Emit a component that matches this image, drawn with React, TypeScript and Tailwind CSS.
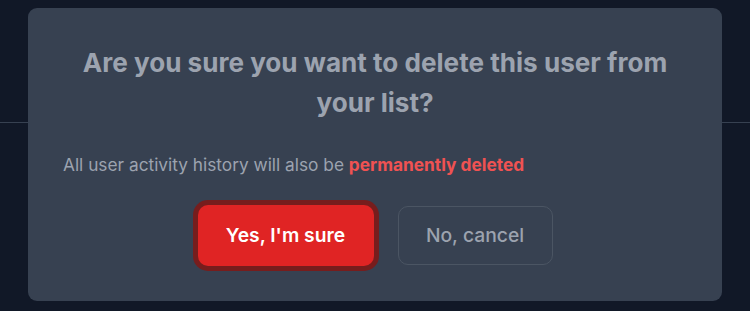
import React from "react";

export default function App() {
  return (
    <div
      className="relative h-[311px] w-[750px] overflow-hidden bg-[#111827]"
      style={{ fontFamily: "Inter, 'Noto Sans', sans-serif" }}
    >
      <div className="h-[123px] border-b border-[#374151]" />
      <div className="absolute left-[28px] top-[8px] flex h-[293px] w-[694px] flex-col rounded-[9px] bg-[#374151] px-[35px] pt-[35px]">
        <h3 className="text-center text-[26.1px] font-bold leading-[40px] text-[#9ca3af]">
          Are you sure you want to delete this user from your list?
        </h3>
        <p className="mt-[28px] text-[17.3px] leading-[28px] text-[#9ca3af]">
          All user activity history will also be{" "}
          <span className="font-bold text-[#f05252]">permanently deleted</span>
        </p>
        <div className="mt-[26px] flex items-center justify-center gap-[24px]">
          <button className="h-[61px] w-[176px] rounded-[10px] bg-[#e02424] text-[19.3px] font-semibold text-white ring-[5px] ring-[#771d1d]">
            Yes, I'm sure
          </button>
          <button className="h-[59px] w-[155px] rounded-[10px] border border-[#4b5563] text-[19.3px] font-medium text-[#9ca3af]">
            No, cancel
          </button>
        </div>
      </div>
    </div>
  );
}
